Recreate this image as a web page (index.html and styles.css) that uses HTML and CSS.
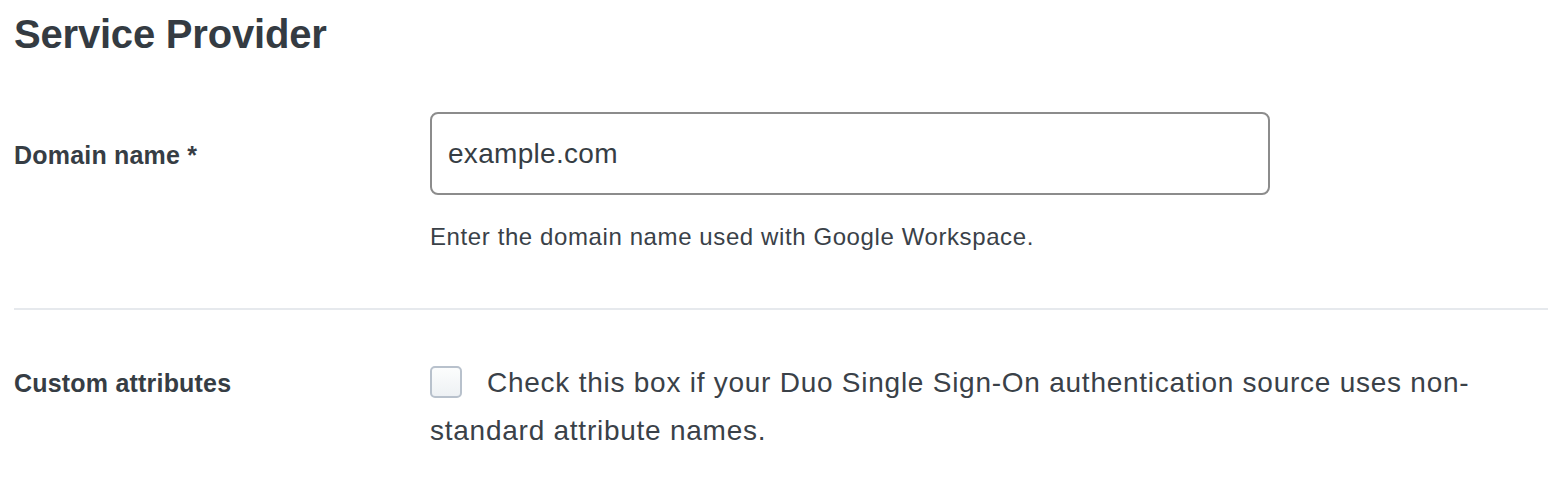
FILE: index.html
```html
<!DOCTYPE html>
<html lang="en">
<head>
    <meta charset="UTF-8" />
    <title>Service Provider</title>
    <link rel="stylesheet" href="styles.css">
</head>
<body>
    <div class="page">
        <h1>Service Provider</h1>

        <div class="field">
            <label class="field-label" for="domain">Domain name *</label>
            <div class="field-body">
                <input type="text" id="domain" class="text-input" value="example.com" />
                <p class="help">Enter the domain name used with Google Workspace.</p>
            </div>
        </div>

        <hr class="divider" />

        <div class="field field-check">
            <span class="field-label">Custom attributes</span>
            <label class="check-label">
                <input type="checkbox" class="checkbox" />Check this box if your Duo Single Sign-On authentication source uses non-standard attribute names.
            </label>
        </div>
    </div>
</body>
</html>
```

FILE: styles.css
```css
body {
    margin: 0;
    font-family: "Liberation Sans", Arial, sans-serif;
    color: #363d44;
    background: #fff;
}
.page {
    padding: 10px 16px 0 14px;
}
h1 {
    margin: 0;
    font-size: 40px;
    line-height: 48px;
    font-weight: bold;
    letter-spacing: -0.2px;
    color: #343b42;
}
.field {
    display: grid;
    grid-template-columns: 416px 840px;
    margin-top: 54px;
}
.field-label {
    font-size: 25px;
    font-weight: bold;
    letter-spacing: 0.2px;
    line-height: 30px;
    padding-top: 28px;
}
.text-input {
    display: block;
    box-sizing: border-box;
    width: 100%;
    height: 83px;
    margin: 0;
    padding: 0 16px;
    border: 2px solid #8c8c8c;
    border-radius: 8px;
    font-family: inherit;
    font-size: 28px;
    letter-spacing: 0.3px;
    color: #363d44;
    outline: none;
}
.help {
    margin: 24px 0 0;
    font-size: 24px;
    letter-spacing: 0.6px;
    line-height: 36px;
    color: #3a4148;
}
.divider {
    margin: 53px 0 0;
    border: none;
    border-top: 2px solid #e6e9ed;
}
.field-check {
    grid-template-columns: 416px 1fr;
    margin-top: 49px;
}
.field-check .field-label {
    padding-top: 0;
    line-height: 48px;
}
.check-label {
    font-size: 28px;
    letter-spacing: 0.75px;
    line-height: 48px;
    color: #3a4148;
}
.checkbox {
    appearance: none;
    -webkit-appearance: none;
    display: inline-block;
    box-sizing: border-box;
    width: 32px;
    height: 32px;
    margin: 0 25px 0 0;
    vertical-align: -6px;
    border: 2px solid #b8c1cc;
    border-radius: 5px;
    background: linear-gradient(#fcfdfd, #eef1f4);
}
```
